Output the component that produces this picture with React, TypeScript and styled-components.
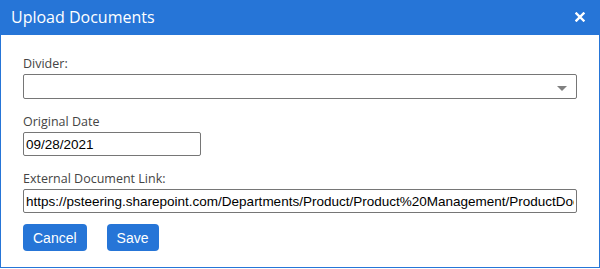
import styled, { createGlobalStyle } from "styled-components";

const GlobalStyle = createGlobalStyle`
  html, body {
    margin: 0;
    padding: 0;
    background: #ffffff;
  }
`;

const Dialog = styled.div`
  box-sizing: border-box;
  width: 600px;
  height: 268px;
  border: 1px solid #2675d7;
  background: #ffffff;
  display: flex;
  flex-direction: column;
`;

const Header = styled.div`
  height: 35px;
  margin: -1px -1px 0;
  background: #2675d7;
  display: flex;
  align-items: center;
  justify-content: space-between;
  padding: 0 15px 0 11px;
`;

const Title = styled.h2`
  margin: -1px 0 0;
  font-family: "Open Sans", sans-serif;
  font-size: 16px;
  font-weight: 400;
  color: #ffffff;
`;

const CloseButton = styled.button`
  border: 0;
  background: none;
  padding: 0;
  display: flex;
  cursor: pointer;
  margin-top: -2px;
`;

const Body = styled.div`
  padding: 20px 22px 0 22px;
  display: flex;
  flex-direction: column;
`;

const Field = styled.div<{ $gap: number }>`
  display: flex;
  flex-direction: column;
  margin-top: ${({ $gap }) => $gap}px;
  &:first-child {
    margin-top: 0;
  }
`;

const Label = styled.label`
  font-family: "Open Sans", sans-serif;
  font-size: 12.5px;
  line-height: 18px;
  color: #444444;
  margin-bottom: 1px;
`;

const SelectBox = styled.div`
  box-sizing: border-box;
  height: 25px;
  border: 1px solid #767676;
  border-radius: 2px;
  display: flex;
  align-items: center;
  justify-content: flex-end;
  padding-right: 9px;
`;

const Arrow = styled.span`
  width: 0;
  height: 0;
  border-left: 5px solid transparent;
  border-right: 5px solid transparent;
  border-top: 5px solid #808080;
  margin-top: 4px;
`;

const TextInput = styled.input<{ $width?: number }>`
  box-sizing: border-box;
  height: 24px;
  width: ${({ $width }) => ($width ? `${$width}px` : "100%")};
  border: 1px solid #767676;
  border-radius: 2px;
  padding: 0 2px;
  font-family: "Liberation Sans", Arial, sans-serif;
  font-size: 13.5px;
  color: #000000;
  background: #ffffff;
  outline: none;
`;

const Actions = styled.div`
  display: flex;
  gap: 20px;
  margin-top: 11px;
`;

const ActionButton = styled.button`
  height: 27px;
  padding: 0 10px;
  border: 0;
  border-radius: 4px;
  background: #2675d7;
  color: #ffffff;
  font-family: "Liberation Sans", Arial, sans-serif;
  font-size: 14px;
  cursor: pointer;
`;

const CloseIcon = () => (
  <svg width="10" height="10" viewBox="0 0 10 10">
    <path d="M1.5 1.5 L8.5 8.5 M8.5 1.5 L1.5 8.5" stroke="#ffffff" strokeWidth="2.4" strokeLinecap="square" />
  </svg>
);

const App = () => {
  return (
    <>
      <GlobalStyle />
      <Dialog>
        <Header>
          <Title>Upload Documents</Title>
          <CloseButton aria-label="Close">
            <CloseIcon />
          </CloseButton>
        </Header>
        <Body>
          <Field $gap={0}>
            <Label>Divider:</Label>
            <SelectBox>
              <Arrow />
            </SelectBox>
          </Field>
          <Field $gap={14}>
            <Label>Original Date</Label>
            <TextInput $width={178} defaultValue="09/28/2021" />
          </Field>
          <Field $gap={14}>
            <Label>External Document Link:</Label>
            <TextInput defaultValue="https://psteering.sharepoint.com/Departments/Product/Product%20Management/ProductDocuments" />
          </Field>
          <Actions>
            <ActionButton>Cancel</ActionButton>
            <ActionButton>Save</ActionButton>
          </Actions>
        </Body>
      </Dialog>
    </>
  );
};

export default App;
